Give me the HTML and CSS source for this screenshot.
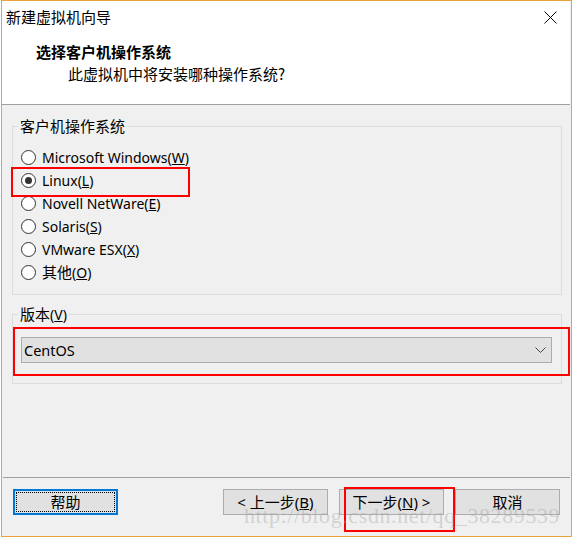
FILE: index.html
```html
<!DOCTYPE html>
<html lang="zh-CN">
<head>
<meta charset="utf-8">
<title>新建虚拟机向导</title>
<link rel="stylesheet" href="styles.css">
</head>
<body>
<div class="window">
  <div class="header">
    <div class="titlebar">
      <span class="title">新建虚拟机向导</span>
      <svg class="close" width="13" height="13" viewBox="0 0 13 13"><path d="M0.5 0.5 L12.5 12.5 M12.5 0.5 L0.5 12.5" stroke="#000" stroke-width="1"/></svg>
    </div>
    <div class="head-main">选择客户机操作系统</div>
    <div class="head-sub">此虚拟机中将安装哪种操作系统?</div>
  </div>
  <div class="body">
    <fieldset class="group os">
      <legend>客户机操作系统</legend>
      <div class="radio"><span class="dot"></span><span>Microsoft Windows(<u>W</u>)</span></div>
      <div class="radio"><span class="dot on"></span><span>Linux(<u>L</u>)</span></div>
      <div class="radio"><span class="dot"></span><span>Novell NetWare(<u>E</u>)</span></div>
      <div class="radio"><span class="dot"></span><span>Solaris(<u>S</u>)</span></div>
      <div class="radio"><span class="dot"></span><span>VMware ESX(<u>X</u>)</span></div>
      <div class="radio"><span class="dot"></span><span><span class="cjk">其他</span>(<u>O</u>)</span></div>
    </fieldset>
    <fieldset class="group ver">
      <legend><span class="cjk">版本</span>(<u>V</u>)</legend>
      <div class="combo">
        <span>CentOS</span>
        <svg class="chev" width="11" height="6" viewBox="0 0 11 6"><path d="M0.5 0.5 L5.5 5.5 L10.5 0.5" fill="none" stroke="#444" stroke-width="1"/></svg>
      </div>
    </fieldset>
    <div class="spacer"></div>
    <div class="footer">
      <button class="btn focus"><span class="focus-ring">帮助</span></button>
      <div class="right-btns">
        <button class="btn">&lt; 上一步(<u>B</u>)</button>
        <button class="btn">下一步(<u>N</u>) &gt;</button>
        <button class="btn">取消</button>
      </div>
    </div>
  </div>
  <div class="mark m1"></div>
  <div class="mark m2"></div>
  <div class="mark m3"></div>
  <div class="watermark">http://blog.csdn.net/qq_38289539</div>
</div>
</body>
</html>
```

FILE: styles.css
```css
html, body {
  margin: 0;
  padding: 0;
  background: #ffffff;
}
body {
  font-family: "Noto Sans", "Noto Sans CJK SC", sans-serif;
  font-size: 15px;
  color: #000;
}
.window {
  position: relative;
  box-sizing: border-box;
  width: 571px;
  height: 537px;
  margin-left: 1px;
  border: 1px solid #e9a23b;
  display: flex;
  flex-direction: column;
  background: #f0f0f0;
}
.header {
  background: #fff;
  height: 103px;
  border-bottom: 1px solid #a0a0a0;
  margin-right: 1px;
  box-sizing: content-box;
}
.titlebar {
  height: 32px;
  display: flex;
  align-items: center;
  justify-content: space-between;
  padding-left: 4px;
  padding-right: 13px;
}
.title {
  font-family: "Noto Sans CJK SC", sans-serif;
  font-size: 15px;
  line-height: 20px;
  color: #000;
}
.close {
  display: block;
}
.head-main {
  font-family: "Noto Sans CJK SC", sans-serif;
  font-weight: bold;
  font-size: 15px;
  line-height: 20px;
  padding-left: 34px;
  margin-top: 9px;
}
.head-sub {
  font-family: "Noto Sans CJK SC", sans-serif;
  font-size: 15px;
  line-height: 20px;
  padding-left: 66px;
  margin-top: 2px;
}
.body {
  flex: 1;
  display: flex;
  flex-direction: column;
  padding-top: 11px;
}
.group {
  margin: 0 9px 0 10px;
  border: 1px solid #dcdcdc;
  padding: 0;
  min-width: 0;
}
.group legend {
  margin-left: -3px;
  padding: 0 2px;
  line-height: 20px;
  font-size: 14px;
  font-family: "Noto Sans", "Noto Sans CJK SC", sans-serif;
}
.cjk {
  font-family: "Noto Sans CJK SC", sans-serif;
  font-size: 15px;
}
.os legend {
  font-family: "Noto Sans CJK SC", sans-serif;
  font-size: 15px;
}
.os {
  padding: 10px 0 10px 8px;
}
.radio {
  height: 23px;
  display: flex;
  align-items: center;
  gap: 6px;
  line-height: 20px;
  font-size: 14px;
}
.dot {
  box-sizing: border-box;
  width: 15px;
  height: 15px;
  border: 1px solid #333;
  border-radius: 50%;
  background: #fff;
  display: flex;
  align-items: center;
  justify-content: center;
  flex: none;
}
.dot.on::after {
  content: "";
  width: 7px;
  height: 7px;
  border-radius: 50%;
  background: #333;
}
.ver {
  margin-top: 9px;
  padding: 12px 9px 20px 8px;
}
.combo {
  box-sizing: border-box;
  height: 26px;
  border: 1px solid #adadad;
  background: #e1e1e1;
  display: flex;
  align-items: center;
  justify-content: space-between;
  padding: 0 5px 0 2px;
  font-size: 14.5px;
}
.chev {
  display: block;
}
.spacer {
  flex: 1;
}
.footer {
  height: 47px;
  border-top: 1px solid #a0a0a0;
  margin: 0 1px;
  display: flex;
  justify-content: space-between;
  align-items: flex-start;
  padding: 11px 10px 0 10px;
}
.right-btns {
  display: flex;
  gap: 11px;
}
.btn {
  box-sizing: border-box;
  width: 105px;
  height: 26px;
  background: #e1e1e1;
  border: 1px solid #adadad;
  font-family: "Noto Sans", "Noto Sans CJK SC", sans-serif;
  font-size: 15px;
  color: #000;
  padding: 0;
  margin: 0;
  line-height: 20px;
}
.btn.focus {
  border: 2px solid #0078d7;
  padding: 1px;
}
.focus-ring {
  display: flex;
  align-items: center;
  justify-content: center;
  height: 100%;
  box-sizing: border-box;
  border: 1px dotted #000;
}
.mark {
  position: absolute;
  border: 2px solid #ff0000;
  box-sizing: border-box;
}
.m1 { left: 9px; top: 166px; width: 179px; height: 30px; }
.m2 { left: 11px; top: 326px; width: 557px; height: 49px; }
.m3 { left: 342px; top: 486px; width: 111px; height: 45px; }
.watermark {
  position: absolute;
  left: 242px;
  top: 502px;
  font-family: "Liberation Serif", serif;
  font-size: 22px;
  color: rgba(160, 160, 160, 0.4);
  letter-spacing: 0.6px;
  white-space: nowrap;
  pointer-events: none;
}
```
